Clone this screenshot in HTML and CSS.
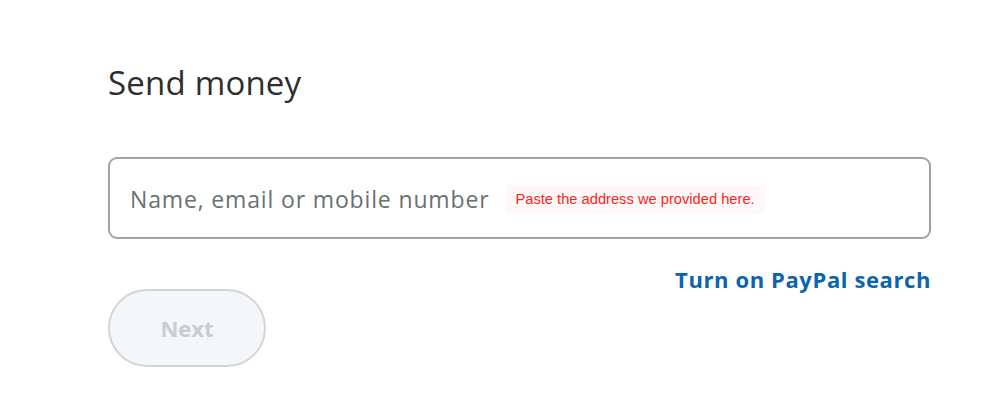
FILE: index.html
```html
<!DOCTYPE html>
<html lang="en">
<head>
<meta charset="utf-8">
<title>Send money</title>
<link rel="stylesheet" href="styles.css">
</head>
<body>
<main class="page">
  <h1 class="title">Send money</h1>
  <div class="field">
    <span class="placeholder">Name, email or mobile number</span>
    <span class="hint">Paste the address we provided here.</span>
  </div>
  <div class="link-row">
    <a class="link" href="#">Turn on PayPal search</a>
  </div>
  <button class="next" type="button" disabled>Next</button>
</main>
</body>
</html>
```
FILE: styles.css
```css
* { box-sizing: border-box; }
html, body { margin: 0; padding: 0; background: #ffffff; }
body { font-family: "Open Sans", "Noto Sans", sans-serif; }
.page {
  width: 1000px;
  height: 414px;
  padding: 60px 69px 0 108px;
  display: flex;
  flex-direction: column;
}
.title {
  margin: 0;
  font-weight: 400;
  font-size: 33px;
  line-height: 46px;
  color: #2c2e2f;
  letter-spacing: 0.2px;
}
.field {
  margin-top: 51px;
  height: 82px;
  border: 2px solid #9da3a6;
  border-radius: 9px;
  display: flex;
  align-items: center;
  padding-left: 20px;
  padding-top: 2px;
}
.placeholder {
  font-size: 23px;
  color: #687173;
  letter-spacing: 0.85px;
}
.hint {
  margin-left: 17px;
  background: #fef9f8;
  color: #ff2222;
  font-family: "Liberation Sans", Arial, sans-serif;
  font-size: 14.7px;
  padding: 6px 10px 6px 9px;
}
.link-row {
  display: flex;
  justify-content: flex-end;
  margin-top: 31px;
}
.link {
  font-size: 22px;
  font-weight: 700;
  color: #0b64b0;
  text-decoration: none;
  line-height: 18px;
  letter-spacing: 0.6px;
}
.next {
  margin-top: 1px;
  width: 158px;
  height: 78px;
  border-radius: 39px;
  border: 2px solid #cfd5d9;
  background: #f4f6f9;
  color: #c8cdd2;
  font-family: "Open Sans", "Noto Sans", sans-serif;
  font-size: 22px;
  font-weight: 700;
  padding: 0;
}
```
